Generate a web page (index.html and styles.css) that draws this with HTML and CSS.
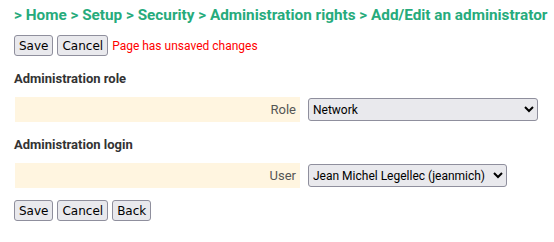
FILE: index.html
```html
<!DOCTYPE html>
<html lang="en">
<head>
<meta charset="UTF-8">
<title>Add/Edit an administrator</title>
<link rel="stylesheet" href="styles.css">
</head>
<body>
<h1 class="path">&gt; Home &gt; Setup &gt; Security &gt; Administration rights &gt; Add/Edit an administrator</h1>
<div class="actions">
    <button>Save</button>
    <button>Cancel</button>
    <span class="unsaved">Page has unsaved changes</span>
</div>

<h2>Administration role</h2>
<div class="field">
    <label class="field-label">Role</label>
    <select class="wide">
        <option>Network</option>
    </select>
</div>

<h2>Administration login</h2>
<div class="field">
    <label class="field-label">User</label>
    <select>
        <option>Jean Michel Legellec (jeanmich)</option>
    </select>
</div>

<div class="actions bottom">
    <button>Save</button>
    <button>Cancel</button>
    <button>Back</button>
</div>
</body>
</html>
```

FILE: styles.css
```css
body {
    font-family: Roboto, "Liberation Sans", Arial, sans-serif;
    margin: 0;
    padding: 0 14px;
    color: #333;
    font-size: 13px;
}
.path {
    color: #26ab7c;
    font-size: 15.3px;
    font-weight: bold;
    margin: 6px 0 11px 0;
    white-space: nowrap;
}
.actions {
    display: flex;
    align-items: center;
    gap: 4px;
}
.actions button {
    font-family: "DejaVu Sans", sans-serif;
    font-size: 12px;
    height: 21px;
    padding: 0 4px;
    border: 1px solid #8f8f9d;
    border-radius: 3px;
    background: #e9e9ed;
    color: #000;
}
.unsaved {
    color: #ff0000;
    font-size: 12px;
}
h2 {
    font-size: 13px;
    font-weight: bold;
    margin: 15px 0 11px 0;
}
.field {
    display: grid;
    grid-template-columns: 285px auto;
    gap: 8px;
    align-items: center;
    margin-left: 1px;
}
.field-label {
    background: #fff5e0;
    color: #555;
    text-align: right;
    padding: 0 4px;
    height: 25px;
    line-height: 25px;
}
.field select {
    justify-self: start;
    font-family: Roboto, "Liberation Sans", Arial, sans-serif;
    font-size: 12px;
    height: 23px;
    padding-right: 4px;
    border: 1px solid #8f8f9d;
    border-radius: 3px;
    background: #e9e9ed;
    color: #000;
}
.field select.wide {
    width: 230px;
}
.bottom {
    margin-top: 12px;
}
```
